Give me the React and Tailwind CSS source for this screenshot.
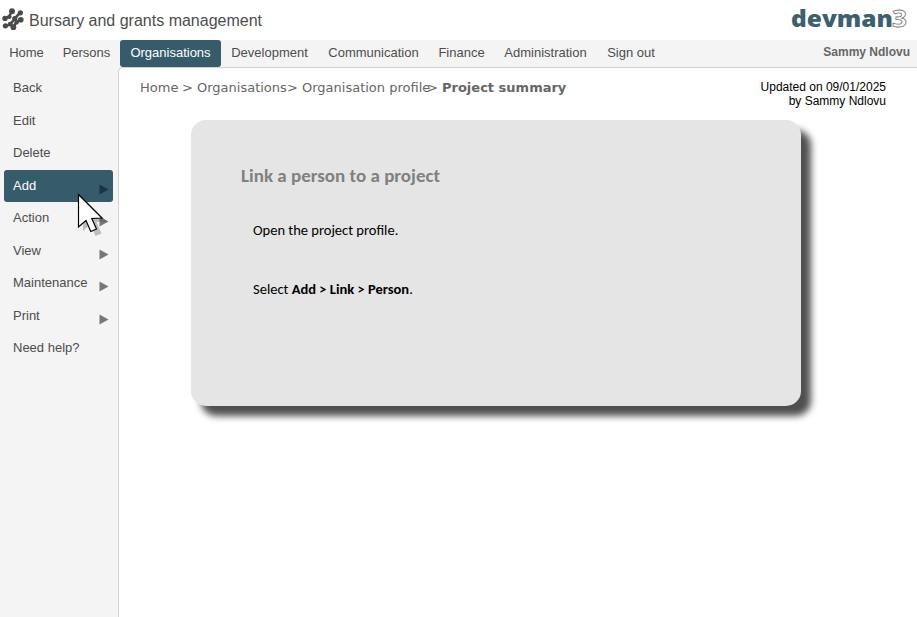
const navItems = [
  { label: 'Home', box: 'w-[53px]', text: 'w-[35px]', len: 35 },
  { label: 'Persons', box: 'w-[67px]', len: 49 },
  { label: 'Organisations', box: 'w-[101px]', len: 82, active: true },
  { label: 'Development', box: 'w-[97px]', len: 78 },
  { label: 'Communication', box: 'w-[111px]', len: 92 },
  { label: 'Finance', box: 'w-[65px]', len: 47 },
  { label: 'Administration', box: 'w-[103px]', len: 85 },
  { label: 'Sign out', box: 'w-[68px]', len: 49 },
];

const sideItems = [
  { label: 'Back' },
  { label: 'Edit' },
  { label: 'Delete' },
  { label: 'Add', arrow: true, active: true },
  { label: 'Action', arrow: true },
  { label: 'View', arrow: true },
  { label: 'Maintenance', arrow: true },
  { label: 'Print', arrow: true },
  { label: 'Need help?' },
];

function DotsLogo() {
  return (
    <svg width="22" height="23" viewBox="0 0 22 23" className="shrink-0" fill="#4a4a4a" stroke="#4a4a4a" strokeLinecap="round">
      <g strokeWidth="2.6">
        <path d="M3 10.5 L7.2 8.6 L10 3" fill="none" />
        <path d="M3.4 18 L8 16.6 L12.5 11 L13.6 9.6 L18.2 4.6" fill="none" />
        <path d="M11.6 19.2 L14.4 14 L18.6 12" fill="none" />
      </g>
      <g stroke="none">
        <circle cx="10" cy="3.2" r="2.9" />
        <circle cx="3" cy="10.4" r="2.7" />
        <circle cx="7.4" cy="8.8" r="2.2" />
        <circle cx="18.4" cy="4.8" r="2.6" />
        <circle cx="12.8" cy="10.6" r="2.6" />
        <circle cx="3.4" cy="17.8" r="2.6" />
        <circle cx="8.2" cy="16.2" r="2.4" />
        <circle cx="11.4" cy="19.2" r="2.9" />
        <circle cx="14.6" cy="14.4" r="2.2" />
        <circle cx="18.8" cy="11.8" r="2.8" />
      </g>
    </svg>
  );
}

function BrandLogo() {
  return (
    <svg width="120" height="30" viewBox="0 0 120 30" className="font-['Open_Sans',sans-serif]">
      <text x="3" y="24" fontSize="23" fontWeight="800" fill="#3b606e" textLength="102" lengthAdjust="spacingAndGlyphs">devman</text>
      <text x="104" y="24" fontSize="24" fontWeight="700" fill="#fff" stroke="#777" strokeWidth="0.8" textLength="15" lengthAdjust="spacingAndGlyphs">3</text>
    </svg>
  );
}

function Cursor() {
  return (
    <svg width="34" height="46" viewBox="0 0 34 46" className="absolute left-[70px] top-[23px] z-10">
      <path d="M8 4 L8 37 L15.5 30 L20.5 42 L26.5 39.5 L21.5 28 L32 28 Z" transform="translate(1 1)" fill="#555" opacity="0.35" />
      <path d="M4.5 1.5 L4.5 34 L12 27.5 L16.8 38.5 L22.5 36 L17.8 25.5 L28 25 Z" fill="#fff" stroke="#000" strokeWidth="1.2" />
    </svg>
  );
}

export default function App() {
  return (
    <div className="flex h-[617px] w-[917px] flex-col overflow-hidden bg-white font-['Liberation_Sans',Arial,sans-serif] text-[#4d4d4d]">
      <header className="flex h-10 shrink-0 justify-between pl-0.5 pr-[9px] pt-2">
        <div className="flex gap-[5px]">
          <DotsLogo />
          <h1 className="whitespace-nowrap text-base leading-[25px]">Bursary and grants management</h1>
        </div>
        <div className="-mt-[5px]">
          <BrandLogo />
        </div>
      </header>
      <div className="flex h-7 shrink-0 justify-between bg-[#f4f4f4]">
        <nav className="flex h-[27px]">
          {navItems.map((item) => (
            <a
              key={item.label}
              className={`flex h-[27px] justify-center whitespace-nowrap text-[13px] leading-[26px] ${item.box} ${item.active ? 'rounded-[3px] bg-[#365b6b] text-white' : ''}`}
            >
              {item.label}
            </a>
          ))}
        </nav>
        <span className="pr-[7px] text-xs font-bold leading-[25px] text-[#666]">Sammy Ndlovu</span>
      </div>
      <div className="flex min-h-0 flex-1 bg-[#f4f4f4]">
        <aside className="w-[118px] shrink-0 pl-1 pt-1">
          {sideItems.map((item) => (
            <div
              key={item.label}
              className={`relative flex h-[32.55px] w-[109px] justify-between pl-[9px] pr-1 text-[13px] leading-[31px] ${item.active ? 'rounded-[3px] bg-[#365b6b] text-white' : ''}`}
            >
              <span className="whitespace-nowrap">{item.label}</span>
              {item.arrow && (
                <svg width="10" height="11" viewBox="0 0 10 11" className="mt-[14px] shrink-0">
                  <path d="M0.5 0.5 L9.5 5.5 L0.5 10.5 Z" fill={item.active ? '#1b3543' : '#777'} />
                </svg>
              )}
              {item.active && <Cursor />}
            </div>
          ))}
        </aside>
        <main className="-mt-px min-w-0 flex-1 rounded-tl-[5px] border-l border-t border-[#d2d2d2] bg-white">
          <div className="flex justify-between pl-[21px] pr-[31px] pt-[11px]">
            <div className="flex whitespace-nowrap font-['DejaVu_Sans',Verdana,sans-serif] text-[13px] leading-[18px] text-[#666]">
              <span className="w-[42px]">Home</span>
              <span className="w-[15px]">&gt;</span>
              <span className="w-[90px]">Organisations</span>
              <span className="w-[15px]">&gt;</span>
              <span className="w-[125px]">Organisation profile</span>
              <span className="w-[15px]">&gt;</span>
              <span className="font-bold">Project summary</span>
            </div>
            <div className="pt-[1px] text-right text-xs leading-[14px] text-black">
              <p>Updated on 09/01/2025</p>
              <p>by Sammy Ndlovu</p>
            </div>
          </div>
          <section className="ml-[72px] mt-3 h-[286px] w-[610px] rounded-[15px] bg-[#e5e5e5] px-[50px] pt-[42px] font-[Carlito,Lato,sans-serif] shadow-[10px_10px_7px_0px_#505050]">
            <h2 className="text-[19px] font-bold leading-7 text-[#808080]">Link a person to a project</h2>
            <div className="pl-3 text-[14.5px] leading-5 text-black">
              <p className="mt-[30px]">Open the project profile.</p>
              <p className="mt-[39px]">
                Select <b>Add &gt; Link &gt; Person</b>.
              </p>
            </div>
          </section>
        </main>
      </div>
    </div>
  );
}
